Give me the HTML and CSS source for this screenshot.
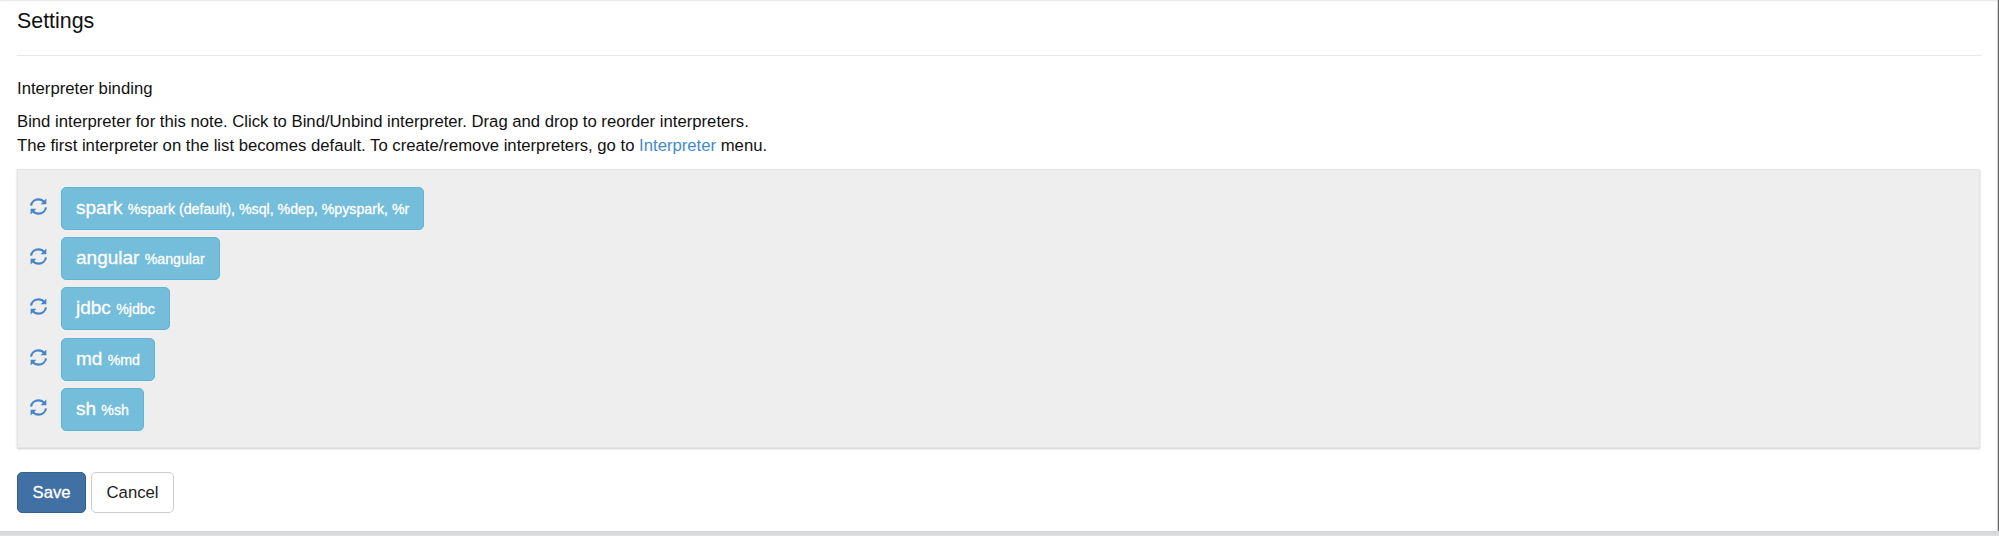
FILE: index.html
```html
<!DOCTYPE html>
<html lang="en">
<head>
<meta charset="utf-8">
<title>Settings</title>
<link rel="stylesheet" href="styles.css">
</head>
<body>
<svg class="sprite" aria-hidden="true">
  <symbol id="refresh" viewBox="0 0 16 16">
    <path class="arc" d="M1 7.2C1.5 3.7 4.4 1.3 8 1.3c2.2 0 4.1.9 5.3 2.4M15 8.8c-.5 3.5-3.4 5.9-7 5.9-2.2 0-4.1-.9-5.3-2.4"/>
    <path class="head" d="M15.4.5v5.4H10zM.6 15.5v-5.4H6z"/>
  </symbol>
</svg>
<main class="settings">
  <h4 class="title">Settings</h4>
  <h5 class="subtitle">Interpreter binding</h5>
  <p class="help">Bind interpreter for this note. Click to Bind/Unbind interpreter. Drag and drop to reorder interpreters.<br>The first interpreter on the list becomes default. To create/remove interpreters, go to <a class="link">Interpreter</a> menu.</p>
  <div class="bindings">
    <div class="row"><svg class="icon"><use href="#refresh"/></svg><button class="btn chip">spark <small>%spark (default), %sql, %dep, %pyspark, %r</small></button></div>
    <div class="row"><svg class="icon"><use href="#refresh"/></svg><button class="btn chip">angular <small>%angular</small></button></div>
    <div class="row"><svg class="icon"><use href="#refresh"/></svg><button class="btn chip">jdbc <small>%jdbc</small></button></div>
    <div class="row"><svg class="icon"><use href="#refresh"/></svg><button class="btn chip">md <small>%md</small></button></div>
    <div class="row"><svg class="icon"><use href="#refresh"/></svg><button class="btn chip">sh <small>%sh</small></button></div>
  </div>
  <div class="actions"><button class="btn save">Save</button><button class="btn cancel">Cancel</button></div>
</main>
</body>
</html>
```
FILE: styles.css
```css
* { box-sizing: border-box; }
body {
  margin: 0;
  height: 536px;
  overflow: hidden;
  background: linear-gradient(#d3d6d7, #dee0e1) 0 531px / 100% 5px no-repeat #fff;
  font-family: "Liberation Sans", Arial, sans-serif;
  font-size: 16.7px;
  line-height: 24px;
  color: #111;
}
.sprite { display: none; }
.settings {
  height: 531px;
  padding: 6px 16px 0 17px;
  border-right: 1px solid #646464;
  background: #fff;
  box-shadow: inset -1px 0 #d8d8d8, inset 0 2px 2px -1px #e4e4e4;
}
.title {
  margin: 0 0 20px;
  height: 50px;
  padding-top: 3px;
  border-bottom: 1px solid #e8e8e8;
  font-size: 21.4px;
  font-weight: 400;
}
.subtitle {
  margin: 0 0 9px;
  padding-top: 1px;
  font-size: 16.7px;
  font-weight: 400;
}
.help { margin: 0 0 11px; white-space: nowrap; }
.link { color: #428bca; }
.bindings {
  display: flex;
  flex-direction: column;
  gap: 7.2px;
  height: 279px;
  margin-right: 2px;
  padding: 17px 12px;
  border: 1px solid #e5e5e5;
  background: #eee;
  box-shadow: 0 1px 2px #ccc;
}
.row { display: flex; align-items: center; gap: 14px; height: 43px; }
.icon { width: 17px; height: 17px; margin-top: -4px; }
.arc { fill: none; stroke: #4585c8; stroke-width: 2; }
.head { fill: #4585c8; }
.btn {
  border: 1px solid;
  border-radius: 5px;
  padding: 0 14px;
  font: 16.7px/24px "Liberation Sans", Arial, sans-serif;
  white-space: nowrap;
}
.chip {
  height: 43px;
  border-color: #60b4d4;
  background: #74bddb;
  color: #fff;
  font-size: 19px;
  -webkit-text-stroke: .3px #fff;
}
.chip small { font-size: 14.2px; }
.actions { display: flex; gap: 5px; margin-top: 24px; }
.save, .cancel { height: 41px; padding: 0 14.5px; }
.save { border-color: #34608f; background: #4170a4; color: #fff; -webkit-text-stroke: .3px #fff; }
.cancel { border-color: #ccc; background: #fff; color: #222; }
```
